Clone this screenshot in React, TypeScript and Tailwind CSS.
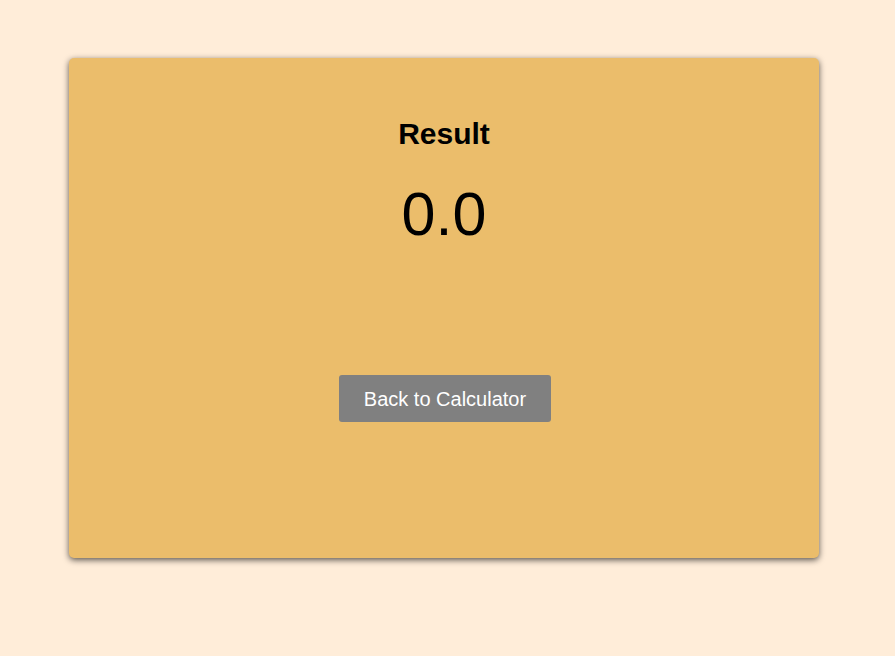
export default function App() {
  return (
    <div
      className="min-h-[656px] w-full bg-[#ffedd9] pt-[58px] pl-[69px]"
      style={{ fontFamily: '"Liberation Sans", Arial, sans-serif' }}
    >
      <div className="flex h-[500px] w-[750px] flex-col items-center rounded-[5px] bg-[#ebbd6b] pt-[61px] shadow-[0_2px_6px_rgba(0,0,0,0.65)]">
        <h2 className="text-[30px] font-bold leading-none text-black">Result</h2>
        <p className="mt-[35px] text-[61px] leading-none text-black">0.0</p>
        <button className="mt-[130px] ml-[2px] flex h-[47px] w-[212px] items-center justify-center rounded-[3px] bg-[#808080] text-[20px] text-white">
          Back to Calculator
        </button>
      </div>
    </div>
  );
}
